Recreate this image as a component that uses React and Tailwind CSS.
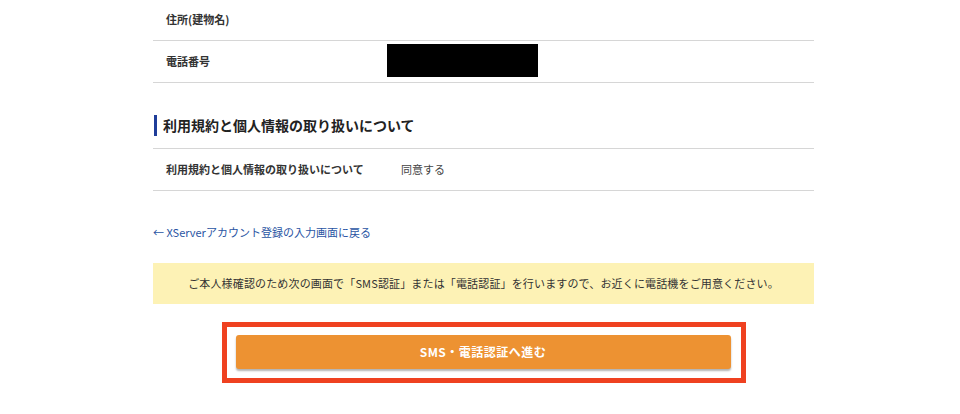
export default function App() {
  const font = { fontFamily: '"Noto Sans CJK JP", "Noto Sans", sans-serif' };
  return (
    <div className="w-[960px] h-[414px] bg-white overflow-hidden" style={font}>
      <div className="ml-[153px] w-[661px]">
        <div className="h-[41px] border-b border-[#d6d6d6] flex items-center pl-[13px] pb-[2px]">
          <span className="text-[11px] font-bold text-[#333]">住所(建物名)</span>
        </div>
        <div className="h-[42px] border-b border-[#d6d6d6] flex items-center pl-[13px] relative">
          <span className="text-[11px] font-bold text-[#333]">電話番号</span>
          <div className="absolute left-[234px] top-[3px] w-[151px] h-[33px] bg-black"></div>
        </div>
        <div className="pt-[31px] pb-[12px] border-b border-[#d6d6d6]">
          <div className="flex items-center h-[22px]">
            <div className="ml-[1px] w-[3px] h-[21px] bg-[#1f3d99]"></div>
            <h2 className="ml-[6px] text-[14px] font-bold text-[#222] leading-none">利用規約と個人情報の取り扱いについて</h2>
          </div>
        </div>
        <div className="h-[42px] border-b border-[#d6d6d6] flex items-center pl-[13px]">
          <span className="w-[235px] text-[11px] font-bold text-[#333]">利用規約と個人情報の取り扱いについて</span>
          <span className="text-[11px] text-[#444]">同意する</span>
        </div>
        <div className="mt-[33px] h-[16px] flex items-center">
          <a className="text-[11px] text-[#2a55a3]">← XServerアカウント登録の入力画面に戻る</a>
        </div>
        <div className="mt-[23px] h-[41px] bg-[#fdf2b5] flex items-center justify-center">
          <p className="text-[11px] text-[#333] tracking-[0.15px]">ご本人様確認のため次の画面で「SMS認証」または「電話認証」を行いますので、お近くに電話機をご用意ください。</p>
        </div>
        <div className="mt-[18px] flex justify-center">
          <div className="w-[524px] h-[61px] border-[5px] border-[#ef4120] pt-[8px] pl-[9px] pr-[10px]">
            <button className="w-[495px] h-[34px] bg-[#ed9232] rounded-[3px] shadow-[0_2px_2px_rgba(0,0,0,0.3)] text-white text-[12px] font-bold tracking-[0.5px]">
              SMS・電話認証へ進む
            </button>
          </div>
        </div>
      </div>
    </div>
  );
}
